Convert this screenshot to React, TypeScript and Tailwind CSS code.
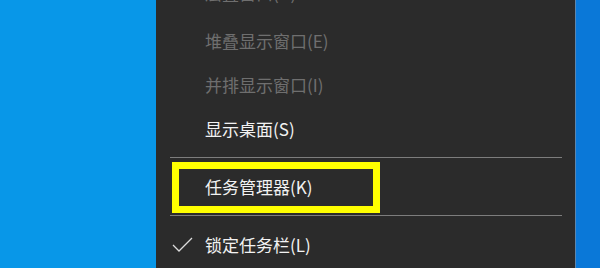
import React from 'react';

type Item = { label: string; disabled?: boolean; checked?: boolean; highlight?: boolean; first?: boolean } | 'sep';

const items: Item[] = [
    { label: '层叠窗口(D)', disabled: true, first: true },
    { label: '堆叠显示窗口(E)', disabled: true },
    { label: '并排显示窗口(I)', disabled: true },
    { label: '显示桌面(S)' },
    'sep',
    { label: '任务管理器(K)', highlight: true },
    'sep',
    { label: '锁定任务栏(L)', checked: true },
];

const App = () => {
    return (
        <div className="flex h-[268px] w-[600px] overflow-hidden bg-[#2b2b2b] font-['Noto_Sans_CJK_SC','Noto_Sans',sans-serif]">
            <div className="w-[156px] shrink-0 bg-[#0897e8]" />

            <div className="flex w-[419px] shrink-0 flex-col bg-[#2b2b2b]">
                <div className="-mt-[33px] flex flex-col">
                    {items.map((item, i) =>
                        item === 'sep' ? (
                            <div key={i} className="flex h-[14px] items-center pl-[14px] pr-[13px]">
                                <div className="h-px w-full bg-[#7d7d7d]" />
                            </div>
                        ) : (
                            <div
                                key={i}
                                className={
                                    item.first
                                        ? 'relative flex h-[51px] items-center pl-[16px]'
                                        : 'relative flex h-[44px] items-center pl-[16px]'
                                }
                            >
                                <div className="flex w-[33px] items-center">
                                    {item.checked && (
                                        <svg width="21" height="15" viewBox="0 0 21 15" fill="none">
                                            <path d="M1 8 L7 14 L20 1" stroke="#dcdcdc" strokeWidth="1.3" />
                                        </svg>
                                    )}
                                </div>
                                <span
                                    className={
                                        item.disabled
                                            ? 'text-[17px] leading-none text-[#6f6f6f]'
                                            : 'text-[17px] leading-none text-[#f2f2f2]'
                                    }
                                >
                                    {item.label}
                                </span>
                                {item.highlight && (
                                    <div className="absolute left-[16px] top-[-2px] h-[51px] w-[208px] border-[7px] border-[#ffff00]" />
                                )}
                            </div>
                        )
                    )}
                </div>
            </div>

            <div className="w-px shrink-0 bg-[#5d86ad]" />
            <div className="flex-1 bg-[#0a78d8]" />
        </div>
    );
};

export default App;
